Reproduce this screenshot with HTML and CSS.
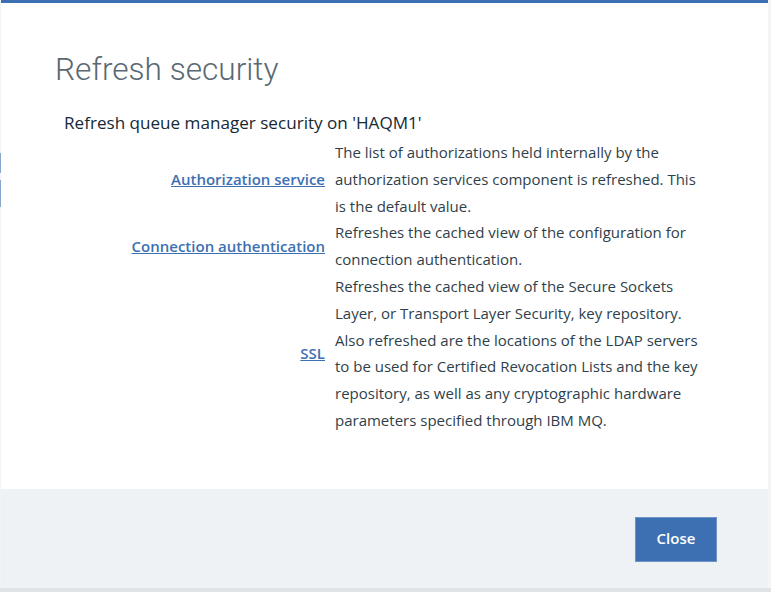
FILE: index.html
```html
<!DOCTYPE html>
<html lang="en">
<head>
<meta charset="utf-8">
<title>Refresh security</title>
<link rel="stylesheet" href="styles.css">
</head>
<body>
<div class="backdrop-edge">
  <span class="edge-mark edge-mark-1"></span>
  <span class="edge-mark edge-mark-2"></span>
</div>
<div class="modal" role="dialog" aria-labelledby="modal-title">
  <div class="modal-body">
    <h2 class="modal-title" id="modal-title">Refresh security</h2>
    <p class="intro">Refresh queue manager security on 'HAQM1'</p>
    <div class="options">
      <a class="option-link" href="#">Authorization service</a>
      <p class="option-desc">The list of authorizations held internally by the authorization services component is refreshed. This is the default value.</p>
      <a class="option-link" href="#">Connection authentication</a>
      <p class="option-desc">Refreshes the cached view of the configuration for connection authentication.</p>
      <a class="option-link" href="#">SSL</a>
      <p class="option-desc">Refreshes the cached view of the Secure Sockets Layer, or Transport Layer Security, key repository. Also refreshed are the locations of the LDAP servers to be used for Certified Revocation Lists and the key repository, as well as any cryptographic hardware parameters specified through IBM MQ.</p>
    </div>
  </div>
  <div class="modal-footer">
    <button class="btn-primary" type="button">Close</button>
  </div>
</div>
<div class="backdrop-edge backdrop-edge-right"></div>
</body>
</html>
```
FILE: styles.css
```css
html, body {
  margin: 0;
  padding: 0;
}
body {
  width: 771px;
  height: 592px;
  background: #dfe3e6;
  display: flex;
  align-items: flex-start;
  overflow: hidden;
  font-family: "Open Sans", "Noto Sans", sans-serif;
}
.backdrop-edge {
  width: 1px;
  height: 588px;
  background: #f1f4f6;
  display: flex;
  flex-direction: column;
}
.backdrop-edge-right {
  width: 3px;
  background: #f3f5f7;
}
.edge-mark {
  display: block;
  width: 1px;
  background: #8aa6cf;
}
.edge-mark-1 {
  margin-top: 153px;
  height: 20px;
}
.edge-mark-2 {
  margin-top: 7px;
  height: 27px;
}
.modal {
  width: 767px;
  height: 585px;
  background: #ffffff;
  border-top: 3px solid #3d70b2;
  display: flex;
  flex-direction: column;
}
.modal-body {
  flex: 1;
  padding: 48px 0 0 54px;
}
.modal-title {
  margin: 0;
  font-family: Roboto, sans-serif;
  font-size: 31.6px;
  line-height: 38px;
  font-weight: 300;
  color: #5a6872;
}
.intro {
  margin: 22px 0 0 9px;
  font-size: 17.1px;
  line-height: 24px;
  color: #152935;
}
.options {
  margin: 4px 0 0 9px;
  display: grid;
  grid-template-columns: 261px 368px;
  column-gap: 10px;
  font-size: 15px;
  line-height: 26.8px;
}
.option-link {
  justify-self: end;
  align-self: center;
  color: #3d70b2;
  font-weight: 600;
  font-size: 15px;
  text-decoration: underline;
}
.option-desc {
  margin: 0;
  color: #2f3f4a;
}
.modal-footer {
  height: 99px;
  background: #eef2f5;
  display: flex;
  justify-content: flex-end;
  align-items: flex-start;
  padding: 28px 51px 0 0;
  box-sizing: border-box;
}
.btn-primary {
  width: 82px;
  height: 45px;
  background: #3d70b2;
  border: 1px solid #6f95c6;
  color: #ffffff;
  font-family: "Open Sans", sans-serif;
  font-size: 15px;
  font-weight: 600;
  line-height: 20px;
  padding: 0 0 3px;
}
```
